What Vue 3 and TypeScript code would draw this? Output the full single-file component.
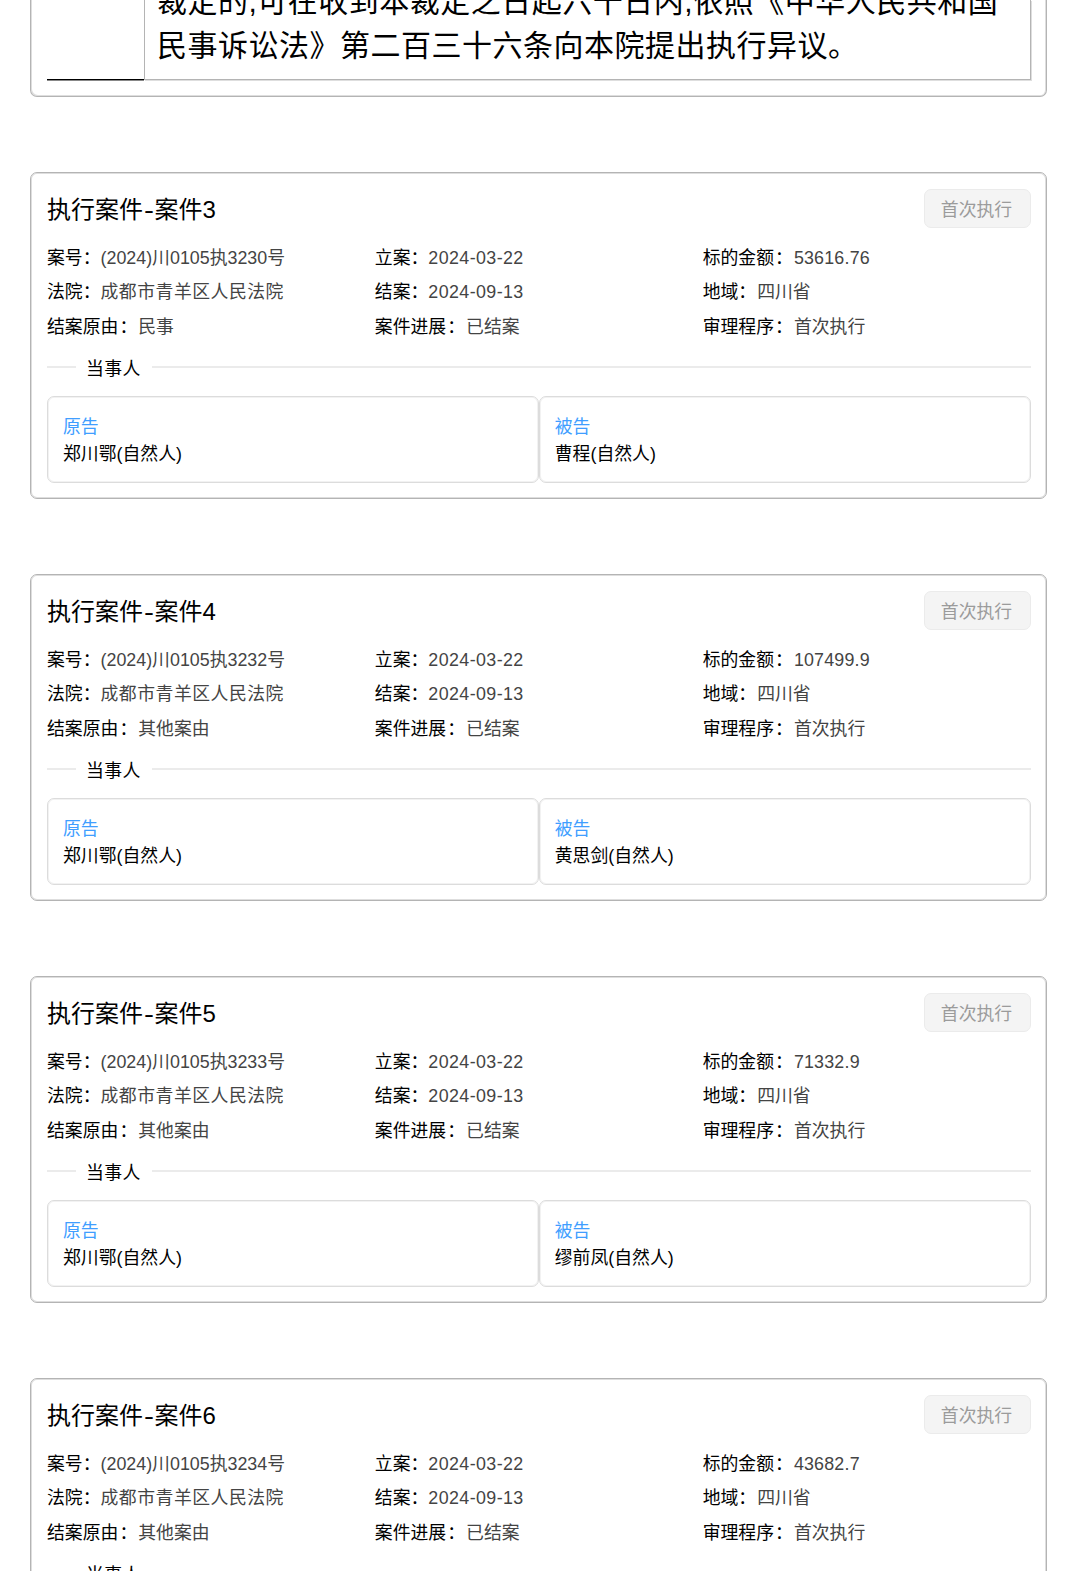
<template>
  <main class="page">
    <section class="card card-previous">
      <div class="verdict">
        <div class="verdict-label"></div>
        <div class="verdict-text">
          <p>裁定的,可在收到本裁定之日起六十日内,依照《中华人民共和国</p>
          <p>民事诉讼法》第二百三十六条向本院提出执行异议。</p>
        </div>
      </div>
    </section>

    <section v-for="item in cases" :key="item.index" class="card">
      <header class="card-header">
        <h2>执行案件<span class="dash">-</span>案件{{ item.index }}</h2>
        <button class="tag" disabled>首次执行</button>
      </header>

      <div class="fields">
        <div v-for="field in getFields(item)" :key="field.label" class="field">
          <span class="label" :class="{ long: field.label.length > 2 }">{{ field.label }}<span class="colon">：</span></span>
          <span class="value" :class="field.type">{{ field.value }}</span>
        </div>
      </div>

      <div class="divider"><span>当事人</span></div>

      <div class="parties">
        <div class="party">
          <div class="role">原告</div>
          <div class="name">郑川鄂(自然人)</div>
        </div>
        <div class="party">
          <div class="role">被告</div>
          <div class="name">{{ item.defendant }}(自然人)</div>
        </div>
      </div>
    </section>
  </main>
</template>

<script setup lang="ts">
interface CaseItem {
  index: number
  caseNo: string
  amount: string
  reason: string
  defendant: string
}

interface Field {
  label: string
  value: string
  type?: string
}

const cases: CaseItem[] = [
  { index: 3, caseNo: '(2024)川0105执3230号', amount: '53616.76', reason: '民事', defendant: '曹程' },
  { index: 4, caseNo: '(2024)川0105执3232号', amount: '107499.9', reason: '其他案由', defendant: '黄思剑' },
  { index: 5, caseNo: '(2024)川0105执3233号', amount: '71332.9', reason: '其他案由', defendant: '缪前凤' },
  { index: 6, caseNo: '(2024)川0105执3234号', amount: '43682.7', reason: '其他案由', defendant: '' }
]

const getFields = (item: CaseItem): Field[] => [
  { label: '案号', value: item.caseNo },
  { label: '立案', value: '2024-03-22', type: 'date' },
  { label: '标的金额', value: item.amount, type: 'amount' },
  { label: '法院', value: '成都市青羊区人民法院', type: 'court' },
  { label: '结案', value: '2024-09-13', type: 'date' },
  { label: '地域', value: '四川省', type: 'region' },
  { label: '结案原由', value: item.reason },
  { label: '案件进展', value: '已结案' },
  { label: '审理程序', value: '首次执行' }
]
</script>

<style>
body {
  margin: 0;
  background: #fff;
}
</style>

<style scoped>
.page {
  box-sizing: border-box;
  height: 1571px;
  overflow: hidden;
  padding: 0 31px 0 30px;
  color: #000;
  font-family: "Liberation Sans", "Noto Sans CJK SC", sans-serif;
  font-size: 17.85px;
}
.card {
  box-sizing: border-box;
  height: 327px;
  margin-bottom: 75px;
  padding: 15px 15.5px 0 16px;
  border: 1px solid #b4b4b4;
  border-radius: 7px;
  box-shadow: inset 0 0 0 1px #dedede;
}
.card-previous {
  height: 97px;
  padding-top: 0;
  border-top: none;
  border-radius: 0 0 7px 7px;
  box-shadow: inset 1px -1px 0 #dedede, inset -1px 0 0 #dedede;
}
.verdict {
  display: flex;
  height: 80px;
}
.verdict-label {
  width: 97px;
  border-bottom: 1px solid #000;
  box-shadow: 0 1px 0 #888;
}
.verdict-text {
  display: flex;
  flex: 1;
  flex-direction: column;
  justify-content: flex-end;
  overflow: hidden;
  padding: 0 0 12px 12px;
  border: 1px solid #b4b4b4;
  border-top: none;
  box-shadow: 1px 1px 0 #dedede;
  font-size: 30px;
  line-height: 43.5px;
  letter-spacing: 0.5px;
  white-space: nowrap;
}
.verdict-text p {
  flex: none;
  margin: 0;
}
.card-header {
  display: flex;
  align-items: center;
  justify-content: space-between;
  height: 39px;
}
h2 {
  margin: 3px 0 0;
  font-size: 24px;
  font-weight: 400;
  line-height: 39px;
}
.dash {
  display: inline-block;
  margin: 0 2px 0 1.5px;
  transform: scaleX(1.25);
}
.tag {
  width: 107px;
  height: 39px;
  margin-top: 1px;
  padding: 0 1px 0 0;
  border: 1px solid #ebebeb;
  border-radius: 7px;
  background: #f4f4f4;
  color: #9b9b9b;
  font: inherit;
}
.fields {
  display: grid;
  grid-template-columns: repeat(3, 1fr);
  grid-auto-rows: 34.3px;
  margin-top: 14px;
}
.field {
  display: flex;
  line-height: 34.3px;
  white-space: nowrap;
}
.long .colon {
  margin: 0 1px;
}
.value {
  color: #444;
}
.date {
  letter-spacing: 0.4px;
}
.amount {
  letter-spacing: 0.2px;
}
.court {
  letter-spacing: 0.5px;
}
.region {
  margin-left: 1px;
}
.divider {
  display: flex;
  align-items: center;
  gap: 10px;
  height: 24px;
  margin-top: 11px;
  line-height: 24px;
}
.divider::before,
.divider::after {
  content: "";
  width: 29px;
  height: 2px;
  background: #ebebeb;
}
.divider::after {
  flex: 1;
}
.divider span {
  width: 56px;
  padding-top: 4px;
  letter-spacing: 0.4px;
}
.parties {
  display: flex;
  margin-top: 17px;
}
.party {
  box-sizing: border-box;
  flex: 1;
  height: 87px;
  padding: 17px 15px;
  border: 1px solid #dcdcdc;
  border-radius: 7px;
  box-shadow: inset 0 0 0 1px #f2f2f2;
  line-height: 27px;
}
.role {
  color: #409eff;
}
</style>
